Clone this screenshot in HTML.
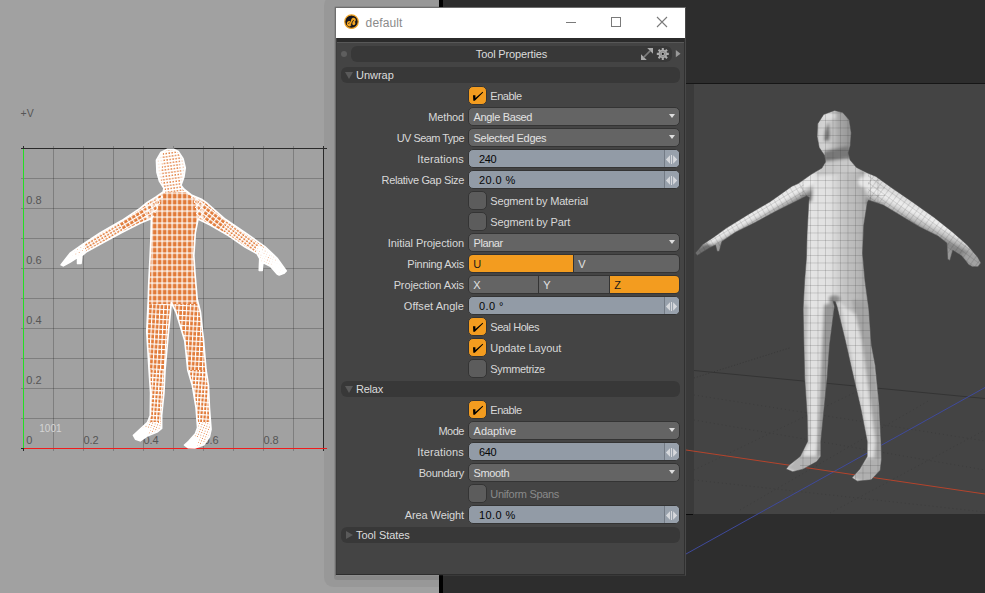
<!DOCTYPE html>
<html>
<head>
<meta charset="utf-8">
<title>default</title>
<style>
*{box-sizing:border-box;margin:0;padding:0}
html,body{width:985px;height:593px;overflow:hidden;background:#a1a1a1;font-family:"Liberation Sans",sans-serif;font-size:11px;color:#d6d6d6}
.abs{position:absolute}
#left{left:0;top:0;width:439px;height:593px;background:#a1a1a1}
#sep{left:439px;top:0;width:4px;height:593px;background:#000}
#right{left:443px;top:0;width:542px;height:593px;background:#2d2d2d}
#vp{left:686px;top:84px;width:299px;height:430px;background:#444}
#vpl{left:686px;top:84px;width:8px;height:430px;background:#3a3a3a}
#vptop{left:686px;top:83px;width:299px;height:1px;background:#161616}
/* window */
#shadow{left:324px;top:-4px;width:115px;height:591px;background:rgba(0,0,0,0.05);border-radius:9px 0 0 9px}
#shadow2{left:334px;top:6px;width:105px;height:574px;background:rgba(0,0,0,0.09);border-radius:2px 0 0 3px}
#win{left:335px;top:7px;width:351px;height:569px;border:1px solid #6e6e6e;border-right-color:#484848;border-bottom-color:rgba(255,255,255,0.06)}
#title{left:336px;top:8px;width:349px;height:30px;background:#fff}
#title .t{left:29.6px;top:8px;font-size:12px;color:#8a8a8a;letter-spacing:0.13px}
#body{left:336px;top:38px;width:349px;height:537px;background:#444}
#band{left:0;top:0;width:349px;height:4px;background:#2b2b2b}
#hl{left:0;top:4px;width:349px;height:1px;background:#585858}
#bl{left:0;top:0;width:1px;height:537px;background:#3e3e3e}
#br{left:348px;top:0;width:1px;height:537px;background:#303030}
#bb{left:0;top:536px;width:349px;height:1px;background:#2e2e2e}
.pill{position:absolute;left:5px;width:339px;height:16px;background:#383838;border-radius:6px;color:#dcdcdc;line-height:16px}
.pill .tx{position:absolute;left:15px;top:0}
.lab{position:absolute;left:0;width:128px;text-align:right;height:19px;line-height:19px;color:#d8d8d8;white-space:nowrap}
.ctl{position:absolute;left:132px;width:212px;height:19px;border:1px solid #343434;border-radius:5px;background:#646464;color:#e2e2e2;line-height:19px;padding-left:4.6px;white-space:nowrap}
.num{background:#929ba6;color:#060606;padding-left:10px}
.cb{position:absolute;left:132px;width:19px;height:19px;border:1px solid #343434;border-radius:5px;background:#5c5c5c}
.cb.on{background:#f39c1f}
.cbl{position:absolute;left:154.3px;height:19px;line-height:19px;color:#d8d8d8;white-space:nowrap}
.arr{position:absolute;right:4.5px;top:6px;width:0;height:0;border-left:3.9px solid transparent;border-right:3.9px solid transparent;border-top:4.6px solid #dedede}
.spin{position:absolute;right:0;top:0;width:15px;height:17px;border-left:1px solid #737b85;background:#98a1ac;border-radius:0 4px 4px 0}

.ck{position:absolute;left:0;top:0}
.cbl.dis{color:#8a8a8a}
.ctl.seg{padding:0;overflow:hidden;background:#343434}
.sg{position:absolute;top:0;height:17px;background:#646464;color:#e2e2e2;padding-left:4.3px;line-height:19px}
.sg.on{background:#f39c1f;color:#1a1a1a}
.dot{left:5px;top:13px;width:6px;height:6px;border-radius:3px;background:#5e5e5e}
.tri{position:absolute;left:4px;top:5px;width:0;height:0}
.tri.dn{border-left:4px solid transparent;border-right:4px solid transparent;border-top:7px solid #5a5a5a}
.tri.rt{left:5px;top:4px;border-top:4px solid transparent;border-bottom:4px solid transparent;border-left:7px solid #5a5a5a}
</style>
</head>
<body>
<div id="left" class="abs"></div>
<div id="sep" class="abs"></div>
<div id="right" class="abs"></div>
<div id="vp" class="abs"></div>
<div id="vpl" class="abs"></div>
<div id="vptop" class="abs"></div>
<!--UV0-->
<svg class="abs" style="left:0;top:0" width="336" height="593" viewBox="0 0 336 593">
<defs>
<clipPath id="bc"><path d="M167.0 149.4 L173.5 149.4 L178.4 151.6 L183.0 158.7 L185.2 167.8 L183.9 176.9 L180.9 185.2 L183.7 189.0 L191.3 195.0 L202.0 199.6 L207.1 203.3 L225.3 219.3 L246.6 233.7 L264.8 246.6 L276.9 258.0 L286.2 270.9 L283.8 273.3 L279.2 274.9 L277.2 273.9 L270.9 266.6 L263.0 262.5 L262.2 270.3 L259.3 270.3 L259.8 258.7 L257.2 253.8 L245.1 247.0 L228.4 235.6 L210.2 225.0 L198.0 219.0 L195.3 232.8 L193.8 255.5 L195.0 273.7 L197.2 299.5 L200.4 312.0 L203.5 340.0 L206.0 370.0 L208.4 385.2 L209.4 407.9 L211.0 429.2 L209.4 436.8 L204.0 444.6 L194.8 447.9 L188.0 447.6 L184.6 445.1 L188.7 441.3 L195.4 433.7 L197.6 427.7 L196.1 407.9 L192.3 385.2 L187.8 370.0 L184.8 340.7 L176.0 312.0 L171.3 302.6 L168.6 330.0 L165.0 370.0 L163.9 392.8 L161.6 415.5 L161.6 428.4 L157.6 431.7 L147.8 435.6 L140.2 440.8 L135.6 439.2 L133.5 435.3 L138.7 430.5 L147.6 422.4 L150.3 415.5 L150.6 392.8 L149.1 370.0 L146.8 331.6 L148.3 299.5 L148.8 282.8 L149.8 263.0 L150.9 240.3 L151.4 218.5 L140.0 223.3 L121.8 232.5 L100.5 243.9 L86.9 251.4 L81.8 255.7 L81.0 263.5 L77.6 263.5 L77.6 257.4 L70.2 262.0 L63.3 265.8 L61.2 264.8 L70.2 253.2 L82.3 244.8 L100.5 232.7 L121.8 220.6 L140.0 208.5 L147.3 202.5 L155.7 197.2 L163.2 192.0 L164.0 188.2 L159.6 181.4 L157.0 172.3 L156.5 160.2 L160.8 152.6 Z"/></clipPath>
<pattern id="pt" width="5.0" height="6.0" patternUnits="userSpaceOnUse" patternTransform="rotate(0) translate(1.5 0.5)"><rect x="0" y="0" width="1.2" height="6.0" fill="#fff"/><rect x="0" y="0" width="5.0" height="1.2" fill="#fff"/></pattern>
<pattern id="pl" width="3.8" height="5.0" patternUnits="userSpaceOnUse" patternTransform="rotate(3) translate(0.5 0)"><rect x="0" y="0" width="1.1" height="5.0" fill="#fff"/><rect x="0" y="0" width="3.8" height="1.1" fill="#fff"/></pattern>
<pattern id="pll" width="3.3" height="4.2" patternUnits="userSpaceOnUse" patternTransform="rotate(4) translate(0 0)"><rect x="0" y="0" width="1.15" height="4.2" fill="#fff"/><rect x="0" y="0" width="3.3" height="1.2" fill="#fff"/></pattern>
<pattern id="pf" width="2.6" height="2.6" patternUnits="userSpaceOnUse" patternTransform="rotate(20) translate(0 0)"><rect x="0" y="0" width="1.7" height="2.6" fill="#fff"/><rect x="0" y="0" width="2.6" height="1.7" fill="#fff"/></pattern>
<pattern id="ph" width="3.0" height="3.2" patternUnits="userSpaceOnUse" patternTransform="rotate(-8) translate(0 0)"><rect x="0" y="0" width="1.5" height="3.2" fill="#fff"/><rect x="0" y="0" width="3.0" height="1.6" fill="#fff"/></pattern>
<pattern id="pal" width="3.4" height="2.8" patternUnits="userSpaceOnUse" patternTransform="rotate(-31) translate(0 0)"><rect x="0" y="0" width="1.3" height="2.8" fill="#fff"/><rect x="0" y="0" width="3.4" height="1.3" fill="#fff"/></pattern>
<pattern id="pal2" width="4.6" height="4.0" patternUnits="userSpaceOnUse" patternTransform="rotate(-31) translate(0 0)"><rect x="0" y="0" width="1.2" height="4.0" fill="#fff"/><rect x="0" y="0" width="4.6" height="1.2" fill="#fff"/></pattern>
<pattern id="par2" width="4.6" height="4.0" patternUnits="userSpaceOnUse" patternTransform="rotate(37) translate(0 0)"><rect x="0" y="0" width="1.2" height="4.0" fill="#fff"/><rect x="0" y="0" width="4.6" height="1.2" fill="#fff"/></pattern>
<pattern id="par" width="3.4" height="2.8" patternUnits="userSpaceOnUse" patternTransform="rotate(37) translate(0 0)"><rect x="0" y="0" width="1.3" height="2.8" fill="#fff"/><rect x="0" y="0" width="3.4" height="1.3" fill="#fff"/></pattern>
</defs>
<rect x="53" y="146" width="1" height="305" fill="#000" opacity="0.215"/><rect x="21" y="178" width="303" height="1" fill="#000" opacity="0.215"/><rect x="83" y="146" width="1" height="305" fill="#000" opacity="0.215"/><rect x="21" y="208" width="303" height="1" fill="#000" opacity="0.215"/><rect x="113" y="146" width="1" height="305" fill="#000" opacity="0.215"/><rect x="21" y="238" width="303" height="1" fill="#000" opacity="0.215"/><rect x="143" y="146" width="1" height="305" fill="#000" opacity="0.215"/><rect x="21" y="268" width="303" height="1" fill="#000" opacity="0.215"/><rect x="173" y="146" width="1" height="305" fill="#000" opacity="0.215"/><rect x="21" y="298" width="303" height="1" fill="#000" opacity="0.215"/><rect x="203" y="146" width="1" height="305" fill="#000" opacity="0.215"/><rect x="21" y="328" width="303" height="1" fill="#000" opacity="0.215"/><rect x="233" y="146" width="1" height="305" fill="#000" opacity="0.215"/><rect x="21" y="358" width="303" height="1" fill="#000" opacity="0.215"/><rect x="263" y="146" width="1" height="305" fill="#000" opacity="0.215"/><rect x="21" y="388" width="303" height="1" fill="#000" opacity="0.215"/><rect x="293" y="146" width="1" height="305" fill="#000" opacity="0.215"/><rect x="21" y="418" width="303" height="1" fill="#000" opacity="0.215"/>
<rect x="21" y="148" width="306" height="1" fill="#2a2a2a"/>
<rect x="323" y="146" width="1" height="305" fill="#2a2a2a"/>
<rect x="23" y="146" width="1" height="3" fill="#2a2a2a"/>
<rect x="21" y="448" width="3" height="1" fill="#2a2a2a"/><rect x="23" y="448" width="1" height="3" fill="#2a2a2a"/>
<rect x="23" y="149" width="1" height="299" fill="#22e022"/>
<rect x="24" y="448" width="303" height="1" fill="#f01c1c"/>
<g font-family="Liberation Sans, sans-serif" font-size="11" fill="#555">
<text x="20.5" y="116.9" font-size="10.5">+V</text>
<text x="26.3" y="203.8">0.8</text>
<text x="26.3" y="263.8">0.6</text>
<text x="26.3" y="323.8">0.4</text>
<text x="26.3" y="383.8">0.2</text>
<text x="26.3" y="443.6">0</text>
<text x="83.4" y="443.6">0.2</text>
<text x="143.4" y="443.6">0.4</text>
<text x="203.4" y="443.6">0.6</text>
<text x="263.4" y="443.6">0.8</text>
<text x="39.3" y="431.8" font-size="10" fill="#d4d4d4">1001</text>
</g>
<path d="M167.0 149.4 L173.5 149.4 L178.4 151.6 L183.0 158.7 L185.2 167.8 L183.9 176.9 L180.9 185.2 L183.7 189.0 L191.3 195.0 L202.0 199.6 L207.1 203.3 L225.3 219.3 L246.6 233.7 L264.8 246.6 L276.9 258.0 L286.2 270.9 L283.8 273.3 L279.2 274.9 L277.2 273.9 L270.9 266.6 L263.0 262.5 L262.2 270.3 L259.3 270.3 L259.8 258.7 L257.2 253.8 L245.1 247.0 L228.4 235.6 L210.2 225.0 L198.0 219.0 L195.3 232.8 L193.8 255.5 L195.0 273.7 L197.2 299.5 L200.4 312.0 L203.5 340.0 L206.0 370.0 L208.4 385.2 L209.4 407.9 L211.0 429.2 L209.4 436.8 L204.0 444.6 L194.8 447.9 L188.0 447.6 L184.6 445.1 L188.7 441.3 L195.4 433.7 L197.6 427.7 L196.1 407.9 L192.3 385.2 L187.8 370.0 L184.8 340.7 L176.0 312.0 L171.3 302.6 L168.6 330.0 L165.0 370.0 L163.9 392.8 L161.6 415.5 L161.6 428.4 L157.6 431.7 L147.8 435.6 L140.2 440.8 L135.6 439.2 L133.5 435.3 L138.7 430.5 L147.6 422.4 L150.3 415.5 L150.6 392.8 L149.1 370.0 L146.8 331.6 L148.3 299.5 L148.8 282.8 L149.8 263.0 L150.9 240.3 L151.4 218.5 L140.0 223.3 L121.8 232.5 L100.5 243.9 L86.9 251.4 L81.8 255.7 L81.0 263.5 L77.6 263.5 L77.6 257.4 L70.2 262.0 L63.3 265.8 L61.2 264.8 L70.2 253.2 L82.3 244.8 L100.5 232.7 L121.8 220.6 L140.0 208.5 L147.3 202.5 L155.7 197.2 L163.2 192.0 L164.0 188.2 L159.6 181.4 L157.0 172.3 L156.5 160.2 L160.8 152.6 Z" fill="#e17a38"/>
<g clip-path="url(#bc)" shape-rendering="crispEdges">
<rect x="144" y="192" width="60" height="112" fill="url(#pt)"/>
<rect x="140" y="304" width="75" height="66" fill="url(#pl)"/>
<rect x="130" y="370" width="85" height="52" fill="url(#pll)"/>
<rect x="130" y="422" width="85" height="30" fill="url(#pf)"/>
<polygon points="130,428 152,428 140,445 130,445" fill="#fff"/><polygon points="180,440 200,436 196,450 180,450" fill="#fff"/>
<rect x="150" y="145" width="40" height="47" fill="url(#ph)"/>
<rect x="150" y="145" width="40" height="47" fill="#fff" opacity="0.12"/>
<polygon points="156,150 163,148 160,190 156,180" fill="#fff" opacity="0.8"/><polygon points="180,150 186,160 185,178 181,186" fill="#fff" opacity="0.6"/>
<polygon points="60,270 60,240 118,215 124,236" fill="url(#pal)"/>
<polygon points="118,215 150,190 166,190 151.4,222 124,236" fill="url(#pal2)"/>
<polygon points="58,270 58,244 84,238 88,268" fill="url(#pf)"/><polygon points="58,270 58,250 74,250 76,268" fill="#fff" opacity="0.9"/><polygon points="77,256 82,255 82,266 77,266" fill="#fff"/>
<polygon points="226,212 290,262 290,280 255,275 222,238" fill="url(#par)"/>
<polygon points="181,188 200,190 226,212 222,238 198,222 194,200" fill="url(#par2)"/>
<polygon points="256,246 292,250 292,282 256,278" fill="url(#pf)"/><polygon points="274,262 292,258 292,282 270,278" fill="#fff" opacity="0.9"/><polygon points="258,262 264,262 264,272 258,272" fill="#fff"/>
</g>
<path d="M167.0 149.4 L173.5 149.4 L178.4 151.6 L183.0 158.7 L185.2 167.8 L183.9 176.9 L180.9 185.2 L183.7 189.0 L191.3 195.0 L202.0 199.6 L207.1 203.3 L225.3 219.3 L246.6 233.7 L264.8 246.6 L276.9 258.0 L286.2 270.9 L283.8 273.3 L279.2 274.9 L277.2 273.9 L270.9 266.6 L263.0 262.5 L262.2 270.3 L259.3 270.3 L259.8 258.7 L257.2 253.8 L245.1 247.0 L228.4 235.6 L210.2 225.0 L198.0 219.0 L195.3 232.8 L193.8 255.5 L195.0 273.7 L197.2 299.5 L200.4 312.0 L203.5 340.0 L206.0 370.0 L208.4 385.2 L209.4 407.9 L211.0 429.2 L209.4 436.8 L204.0 444.6 L194.8 447.9 L188.0 447.6 L184.6 445.1 L188.7 441.3 L195.4 433.7 L197.6 427.7 L196.1 407.9 L192.3 385.2 L187.8 370.0 L184.8 340.7 L176.0 312.0 L171.3 302.6 L168.6 330.0 L165.0 370.0 L163.9 392.8 L161.6 415.5 L161.6 428.4 L157.6 431.7 L147.8 435.6 L140.2 440.8 L135.6 439.2 L133.5 435.3 L138.7 430.5 L147.6 422.4 L150.3 415.5 L150.6 392.8 L149.1 370.0 L146.8 331.6 L148.3 299.5 L148.8 282.8 L149.8 263.0 L150.9 240.3 L151.4 218.5 L140.0 223.3 L121.8 232.5 L100.5 243.9 L86.9 251.4 L81.8 255.7 L81.0 263.5 L77.6 263.5 L77.6 257.4 L70.2 262.0 L63.3 265.8 L61.2 264.8 L70.2 253.2 L82.3 244.8 L100.5 232.7 L121.8 220.6 L140.0 208.5 L147.3 202.5 L155.7 197.2 L163.2 192.0 L164.0 188.2 L159.6 181.4 L157.0 172.3 L156.5 160.2 L160.8 152.6 Z" fill="none" stroke="#fff" stroke-width="1.7" stroke-linejoin="round"/>
</svg>
<!--UV1-->
<!--VP0-->
<svg class="abs" style="left:686px;top:0" width="299" height="593" viewBox="686 0 299 593">
<defs>
<clipPath id="fc"><path d="M834.6 110.4 L842.8 112.6 L849.2 120.0 L851.2 132.8 L850.3 145.5 L848.3 152.8 L850.1 160.1 L856.5 167.4 L867.4 172.9 L875.9 176.4 L892.3 188.2 L912.4 201.9 L934.2 217.4 L952.4 231.9 L967.0 244.7 L977.9 257.4 L980.9 262.9 L977.9 266.7 L972.5 266.7 L968.8 264.7 L961.5 255.8 L952.8 250.3 L949.9 260.4 L947.7 259.3 L946.8 243.1 L937.9 236.0 L919.6 226.9 L901.4 215.9 L883.2 205.0 L868.6 200.2 L867.3 202.6 L863.7 225.4 L862.5 253.2 L865.0 281.1 L868.8 308.9 L871.3 344.4 L875.2 365.3 L879.0 403.2 L881.0 441.2 L881.5 458.9 L880.2 470.2 L871.2 479.8 L857.3 481.3 L852.0 477.8 L859.8 469.0 L867.2 456.3 L867.2 441.2 L860.8 408.3 L852.0 370.3 L845.2 340.0 L837.0 306.4 L835.2 301.5 L833.2 301.5 L834.4 306.4 L829.6 344.4 L827.1 377.9 L823.3 415.9 L820.8 441.2 L820.8 456.3 L816.8 461.6 L802.9 469.2 L792.8 471.7 L786.2 469.0 L789.0 465.2 L800.3 456.3 L807.7 441.2 L807.2 415.9 L804.7 377.9 L803.9 344.4 L803.1 308.9 L804.6 281.1 L806.4 258.3 L807.1 233.0 L808.9 200.1 L809.3 197.5 L806.6 195.9 L795.6 201.4 L777.4 210.5 L755.6 222.3 L735.5 232.3 L721.9 241.4 L719.3 251.3 L717.1 251.3 L715.5 245.1 L708.2 248.7 L697.3 255.4 L695.3 252.9 L702.8 244.5 L713.7 237.2 L726.4 228.1 L748.3 214.4 L770.1 201.7 L792.0 186.2 L798.2 183.6 L811.0 174.5 L821.9 168.1 L825.5 161.9 L824.6 155.6 L819.2 147.4 L817.1 136.4 L817.7 123.7 L823.7 114.4 Z"/></clipPath>
<linearGradient id="gt" x1="804" y1="0" x2="872" y2="0" gradientUnits="userSpaceOnUse"><stop offset="0" stop-color="#c0c0c0"/><stop offset="0.09" stop-color="#e4e4e4"/><stop offset="0.4" stop-color="#e0e0e0"/><stop offset="0.56" stop-color="#c6c6c6"/><stop offset="0.72" stop-color="#bcbcbc"/><stop offset="0.9" stop-color="#aeaeae"/><stop offset="1" stop-color="#949494"/></linearGradient>
<linearGradient id="gh" x1="817" y1="0" x2="852" y2="0" gradientUnits="userSpaceOnUse"><stop offset="0" stop-color="#cdcdcd"/><stop offset="0.22" stop-color="#d4d4d4"/><stop offset="0.45" stop-color="#c2c2c2"/><stop offset="0.62" stop-color="#a8a8a8"/><stop offset="1" stop-color="#929292"/></linearGradient>
<linearGradient id="gal" x1="750" y1="212" x2="757" y2="224" gradientUnits="userSpaceOnUse"><stop offset="0" stop-color="#e4e4e4"/><stop offset="0.45" stop-color="#eeeeee"/><stop offset="0.8" stop-color="#b0b0b0"/><stop offset="1" stop-color="#7e7e7e"/></linearGradient>
<linearGradient id="gar" x1="925" y1="209" x2="916" y2="226" gradientUnits="userSpaceOnUse"><stop offset="0" stop-color="#dcdcdc"/><stop offset="0.4" stop-color="#f0f0f0"/><stop offset="0.8" stop-color="#b8b8b8"/><stop offset="1" stop-color="#858585"/></linearGradient>
<linearGradient id="gll" x1="804" y1="0" x2="828" y2="0" gradientUnits="userSpaceOnUse"><stop offset="0" stop-color="#c4c4c4"/><stop offset="0.2" stop-color="#e2e2e2"/><stop offset="0.6" stop-color="#d4d4d4"/><stop offset="1" stop-color="#a2a2a2"/></linearGradient>
<linearGradient id="glr" x1="840" y1="0" x2="884" y2="0" gradientUnits="userSpaceOnUse" gradientTransform="skewX(0)"><stop offset="0" stop-color="#cfcfcf"/><stop offset="0.3" stop-color="#e0e0e0"/><stop offset="0.65" stop-color="#c6c6c6"/><stop offset="1" stop-color="#9c9c9c"/></linearGradient>
<pattern id="wf" width="7.5" height="7.5" patternUnits="userSpaceOnUse"><rect width="0.9" height="7.5" fill="#222" opacity="0.17"/><rect width="7.5" height="0.9" fill="#222" opacity="0.17"/></pattern>
<pattern id="wfl" width="5" height="5.5" patternUnits="userSpaceOnUse" patternTransform="rotate(-31)"><rect width="0.8" height="5.5" fill="#222" opacity="0.17"/><rect width="5" height="0.8" fill="#222" opacity="0.15"/></pattern>
<pattern id="wfr" width="5" height="5.5" patternUnits="userSpaceOnUse" patternTransform="rotate(36)"><rect width="0.8" height="5.5" fill="#222" opacity="0.17"/><rect width="5" height="0.8" fill="#222" opacity="0.15"/></pattern>
<filter id="bl"><feGaussianBlur stdDeviation="1.6"/></filter>
</defs>
<g fill="none" stroke-width="1">
<path d="M694 370.5 L985 398.5" stroke="#343434"/>
<path d="M694 378 L791 347.5" stroke="#383838" stroke-dasharray="1 2"/>
<path d="M694 395 L985 441" stroke="#3c3c3c" stroke-dasharray="1 3"/>
<path d="M694 420 L985 470" stroke="#3c3c3c" stroke-dasharray="1 3"/>
<path d="M694 480 L985 512" stroke="#3c3c3c" stroke-dasharray="1 3"/>
<path d="M740 510 L930 400" stroke="#3c3c3c" stroke-dasharray="1 3"/>
<path d="M694 470 L860 390" stroke="#3c3c3c" stroke-dasharray="1 3"/>
<path d="M830 513 L985 430" stroke="#3c3c3c" stroke-dasharray="1 3"/>
<path d="M686 554 L985 387.5" stroke="#3f4a9c"/>
<path d="M686 450 L985 494" stroke="#b5442c"/>
</g>
<rect x="686" y="514" width="7" height="1" fill="#0c0c0c"/>
<g clip-path="url(#fc)">
<g filter="url(#bl)">
<path d="M834.6 110.4 L842.8 112.6 L849.2 120.0 L851.2 132.8 L850.3 145.5 L848.3 152.8 L850.1 160.1 L856.5 167.4 L867.4 172.9 L875.9 176.4 L892.3 188.2 L912.4 201.9 L934.2 217.4 L952.4 231.9 L967.0 244.7 L977.9 257.4 L980.9 262.9 L977.9 266.7 L972.5 266.7 L968.8 264.7 L961.5 255.8 L952.8 250.3 L949.9 260.4 L947.7 259.3 L946.8 243.1 L937.9 236.0 L919.6 226.9 L901.4 215.9 L883.2 205.0 L868.6 200.2 L867.3 202.6 L863.7 225.4 L862.5 253.2 L865.0 281.1 L868.8 308.9 L871.3 344.4 L875.2 365.3 L879.0 403.2 L881.0 441.2 L881.5 458.9 L880.2 470.2 L871.2 479.8 L857.3 481.3 L852.0 477.8 L859.8 469.0 L867.2 456.3 L867.2 441.2 L860.8 408.3 L852.0 370.3 L845.2 340.0 L837.0 306.4 L835.2 301.5 L833.2 301.5 L834.4 306.4 L829.6 344.4 L827.1 377.9 L823.3 415.9 L820.8 441.2 L820.8 456.3 L816.8 461.6 L802.9 469.2 L792.8 471.7 L786.2 469.0 L789.0 465.2 L800.3 456.3 L807.7 441.2 L807.2 415.9 L804.7 377.9 L803.9 344.4 L803.1 308.9 L804.6 281.1 L806.4 258.3 L807.1 233.0 L808.9 200.1 L809.3 197.5 L806.6 195.9 L795.6 201.4 L777.4 210.5 L755.6 222.3 L735.5 232.3 L721.9 241.4 L719.3 251.3 L717.1 251.3 L715.5 245.1 L708.2 248.7 L697.3 255.4 L695.3 252.9 L702.8 244.5 L713.7 237.2 L726.4 228.1 L748.3 214.4 L770.1 201.7 L792.0 186.2 L798.2 183.6 L811.0 174.5 L821.9 168.1 L825.5 161.9 L824.6 155.6 L819.2 147.4 L817.1 136.4 L817.7 123.7 L823.7 114.4 Z" fill="#d6d6d6"/>
<rect x="796" y="160" width="84" height="190" fill="url(#gt)"/>
<rect x="808" y="100" width="50" height="62" fill="url(#gh)"/>
<polygon points="824,151 848,146 851,160 824,164" fill="#787878"/>
<ellipse cx="828" cy="116" rx="8" ry="4" fill="#dedede"/>
<polygon points="822,162 852,158 860,172 816,176" fill="#c8c8c8"/>
<polygon points="686,264 686,230 792,178 814,172 812,201 796,206 722,245 722,260" fill="url(#gal)"/>
<polygon points="864,166 880,172 985,252 985,280 945,266 946,246 866,205" fill="url(#gar)"/>
<polygon points="798,330 834,300 832,345 826,445 826,480 776,480 804,440" fill="#e0e0e0"/>
<polygon points="800,305 808,305 807,345 810,441 800,460 790,470 800,441 801,345" fill="#b8b8b8"/>
<polygon points="824,305 836,300 832,345 823,441 823,462 816,462 817.5,441 822,345" fill="#989898"/>
<polygon points="836,300 876,330 888,440 888,490 844,490 864,445 844,345" fill="#dedede"/>
<polygon points="852,300 872,300 873,340 884,441 884,480 872,484 875.5,441 861.5,340" fill="#a4a4a4"/>
<polygon points="834,304 840,304 848,340 869,441 866,452 863,441 843,340" fill="#c0c0c0"/>
<ellipse cx="834.5" cy="299" rx="6" ry="4" fill="#8c8c8c"/>
<polygon points="825,131 828.5,122 830,134 829,141 824,141" fill="#6e6e6e"/>
<ellipse cx="866" cy="182" rx="8" ry="6" fill="#e6e6e6"/>
<polygon points="786,468 800,456 822,456 818,464 800,474" fill="#b4b4b4"/>
<polygon points="692,258 692,250 706,243 716,246 706,254" fill="#6e6e6e"/>
<polygon points="714,244 722,241 720,254 716,254" fill="#9a9a9a"/>
<polygon points="962,254 972,252 984,264 978,270 968,268" fill="#a2a2a2"/>
<polygon points="946,246 952,250 950,262 946,262" fill="#9a9a9a"/>
<polygon points="852,478 866,458 882,458 880,472 868,484" fill="#b0b0b0"/>
</g>
<rect x="800" y="105" width="85" height="385" fill="url(#wf)"/>
<polygon points="690,262 690,232 800,170 808,200" fill="url(#wfl)"/>
<polygon points="868,168 985,250 985,275 868,206" fill="url(#wfr)"/>
</g>
<path d="M834.6 110.4 L842.8 112.6 L849.2 120.0 L851.2 132.8 L850.3 145.5 L848.3 152.8 L850.1 160.1 L856.5 167.4 L867.4 172.9 L875.9 176.4 L892.3 188.2 L912.4 201.9 L934.2 217.4 L952.4 231.9 L967.0 244.7 L977.9 257.4 L980.9 262.9 L977.9 266.7 L972.5 266.7 L968.8 264.7 L961.5 255.8 L952.8 250.3 L949.9 260.4 L947.7 259.3 L946.8 243.1 L937.9 236.0 L919.6 226.9 L901.4 215.9 L883.2 205.0 L868.6 200.2 L867.3 202.6 L863.7 225.4 L862.5 253.2 L865.0 281.1 L868.8 308.9 L871.3 344.4 L875.2 365.3 L879.0 403.2 L881.0 441.2 L881.5 458.9 L880.2 470.2 L871.2 479.8 L857.3 481.3 L852.0 477.8 L859.8 469.0 L867.2 456.3 L867.2 441.2 L860.8 408.3 L852.0 370.3 L845.2 340.0 L837.0 306.4 L835.2 301.5 L833.2 301.5 L834.4 306.4 L829.6 344.4 L827.1 377.9 L823.3 415.9 L820.8 441.2 L820.8 456.3 L816.8 461.6 L802.9 469.2 L792.8 471.7 L786.2 469.0 L789.0 465.2 L800.3 456.3 L807.7 441.2 L807.2 415.9 L804.7 377.9 L803.9 344.4 L803.1 308.9 L804.6 281.1 L806.4 258.3 L807.1 233.0 L808.9 200.1 L809.3 197.5 L806.6 195.9 L795.6 201.4 L777.4 210.5 L755.6 222.3 L735.5 232.3 L721.9 241.4 L719.3 251.3 L717.1 251.3 L715.5 245.1 L708.2 248.7 L697.3 255.4 L695.3 252.9 L702.8 244.5 L713.7 237.2 L726.4 228.1 L748.3 214.4 L770.1 201.7 L792.0 186.2 L798.2 183.6 L811.0 174.5 L821.9 168.1 L825.5 161.9 L824.6 155.6 L819.2 147.4 L817.1 136.4 L817.7 123.7 L823.7 114.4 Z" fill="none" stroke="#4a4a4a" stroke-width="0.9" opacity="0.55"/>
</svg>
<!--VP1-->
<div id="shadow" class="abs"></div><div id="shadow2" class="abs"></div>
<div id="win" class="abs"></div>
<div id="title" class="abs"><div class="abs t">default</div>
<svg class="abs" style="left:0;top:0" width="349" height="30" viewBox="0 0 349 30">
<circle cx="15.5" cy="13.7" r="6.75" fill="#17171f" stroke="#f0a11f" stroke-width="1.2"/>
<path d="M11 16.6 C10.4 14.6 11.6 12.8 13.2 12.9 C14 12.9 14.5 13.5 14.6 14.2 C15 12.4 15.2 10.4 16.8 9.8 C18.4 9.2 19.9 10.4 19.8 12 C19.7 13 19.2 13.5 18.6 13.7 C19.8 14.4 19.6 16.4 18.2 17 C16.8 17.6 16.2 16.4 16.2 15.6 C15.8 17.6 14.4 18.6 13 18.4 C12 18.3 11.2 17.6 11 16.6 Z" fill="#f3a521"/>
<path d="M15.1 17.2 C15.9 15.4 16.2 13.6 17.6 12.2" stroke="#17171f" stroke-width="1" fill="none"/>
<path d="M12.4 15.8 C12.6 14.8 13.2 14.6 13.6 15" stroke="#17171f" stroke-width="0.8" fill="none"/>
<path d="M230 14.5 H240" stroke="#7a7a7a" stroke-width="1"/>
<rect x="275.5" y="9.5" width="9" height="9" fill="none" stroke="#7a7a7a" stroke-width="1"/>
<path d="M321 9 L331 19 M331 9 L321 19" stroke="#7a7a7a" stroke-width="1.1"/>
</svg>
</div>
<div id="body" class="abs">
<div id="band" class="abs"></div><div id="hl" class="abs"></div><div id="bl" class="abs"></div><div id="br" class="abs"></div><div id="bb" class="abs"></div>
<!--PANEL-->
<div class="abs dot"></div>
<div class="pill" style="left:15px;top:8px;width:321px;text-align:center"><span style="letter-spacing:-0.13px">Tool Properties</span></div>
<svg class="abs" style="left:300px;top:5px" width="48" height="22" viewBox="0 0 48 22">
<path d="M11.2 5 L17 5 L17 10.8 Z M5 11.2 L5 17 L10.8 17 Z" fill="#a9a9a9"/>
<path d="M7.6 14.4 L14.4 7.6" stroke="#7c7c7c" stroke-width="1.6" fill="none"/>
<g transform="translate(15.8,-0.1)"><path d="M9.94 6.83 L9.97 4.99 L12.03 4.99 L12.06 6.83 L13.19 7.30 L14.52 6.02 L15.98 7.48 L14.70 8.81 L15.17 9.94 L17.01 9.97 L17.01 12.03 L15.17 12.06 L14.70 13.19 L15.98 14.52 L14.52 15.98 L13.19 14.70 L12.06 15.17 L12.03 17.01 L9.97 17.01 L9.94 15.17 L8.81 14.70 L7.48 15.98 L6.02 14.52 L7.30 13.19 L6.83 12.06 L4.99 12.03 L4.99 9.97 L6.83 9.94 L7.30 8.81 L6.02 7.48 L7.48 6.02 L8.81 7.30Z" fill="#ababab"/><circle cx="11" cy="11" r="2.6" fill="none" stroke="#8a8a8a" stroke-width="1"/><circle cx="11" cy="11" r="1.1" fill="#1c1c1c"/></g>
<path d="M39.8 7.1 L44.5 10.7 L39.8 14.3 Z" fill="#9a9a9a"/>
</svg>
<div class="pill" style="top:29px"><div class="tri dn"></div><div class="tx"><span style="letter-spacing:-0.02px">Unwrap</span></div></div>
<div class="cb on" style="top:48px"><svg class="ck" width="17" height="17" viewBox="0 0 17 17"><path d="M4 8.2 L6.4 8.2 L6.4 11 L13.6 4.8 L14.1 5.5 L5.8 13.8 L4.3 13.8 Z" fill="#000"/></svg></div><div class="cbl" style="top:49px"><span style="letter-spacing:-0.48px">Enable</span></div>
<div class="lab" style="top:70px"><span style="letter-spacing:-0.17px">Method</span></div><div class="ctl" style="top:69px"><span style="letter-spacing:-0.35px">Angle Based</span><div class="arr"></div></div>
<div class="lab" style="top:91px"><span style="letter-spacing:-0.54px">UV Seam Type</span></div><div class="ctl" style="top:90px"><span style="letter-spacing:-0.32px">Selected Edges</span><div class="arr"></div></div>
<div class="lab" style="top:112px"><span style="letter-spacing:0.14px">Iterations</span></div><div class="ctl num" style="top:111px"><span style="letter-spacing:-0.4px">240</span><div class="spin"><svg width="14" height="17" viewBox="0 0 14 17"><path d="M0.9 9.5 L5 5.2 L5 13.8 Z" fill="#d6d8dc"/><rect x="6" y="5" width="1" height="9" fill="#d6d8dc"/><path d="M12.2 9.5 L8.1 5.2 L8.1 13.8 Z" fill="#d6d8dc"/></svg></div></div>
<div class="lab" style="top:133px"><span style="letter-spacing:-0.33px">Relative Gap Size</span></div><div class="ctl num" style="top:132px"><span style="letter-spacing:0.42px">20.0 %</span><div class="spin"><svg width="14" height="17" viewBox="0 0 14 17"><path d="M0.9 9.5 L5 5.2 L5 13.8 Z" fill="#d6d8dc"/><rect x="6" y="5" width="1" height="9" fill="#d6d8dc"/><path d="M12.2 9.5 L8.1 5.2 L8.1 13.8 Z" fill="#d6d8dc"/></svg></div></div>
<div class="cb" style="top:153px"></div><div class="cbl" style="top:154px"><span style="letter-spacing:-0.17px">Segment by Material</span></div>
<div class="cb" style="top:174px"></div><div class="cbl" style="top:175px"><span style="letter-spacing:-0.14px">Segment by Part</span></div>
<div class="lab" style="top:196px"><span style="letter-spacing:-0.08px">Initial Projection</span></div><div class="ctl" style="top:195px"><span style="letter-spacing:-0.45px">Planar</span><div class="arr"></div></div>
<div class="lab" style="top:217px"><span style="letter-spacing:-0.27px">Pinning Axis</span></div><div class="ctl seg" style="top:216px"><div class="sg on" style="left:0;width:104px">U</div><div class="sg" style="left:105px;width:105px">V</div></div>
<div class="lab" style="top:238px"><span style="letter-spacing:-0.12px">Projection Axis</span></div><div class="ctl seg" style="top:237px"><div class="sg" style="left:0;width:69px">X</div><div class="sg" style="left:70px;width:70px">Y</div><div class="sg on" style="left:141px;width:69px">Z</div></div>
<div class="lab" style="top:259px"><span style="letter-spacing:0.04px">Offset Angle</span></div><div class="ctl num" style="top:258px"><span style="letter-spacing:0.4px">0.0 °</span><div class="spin"><svg width="14" height="17" viewBox="0 0 14 17"><path d="M0.9 9.5 L5 5.2 L5 13.8 Z" fill="#d6d8dc"/><rect x="6" y="5" width="1" height="9" fill="#d6d8dc"/><path d="M12.2 9.5 L8.1 5.2 L8.1 13.8 Z" fill="#d6d8dc"/></svg></div></div>
<div class="cb on" style="top:279px"><svg class="ck" width="17" height="17" viewBox="0 0 17 17"><path d="M4 8.2 L6.4 8.2 L6.4 11 L13.6 4.8 L14.1 5.5 L5.8 13.8 L4.3 13.8 Z" fill="#000"/></svg></div><div class="cbl" style="top:280px"><span style="letter-spacing:-0.44px">Seal Holes</span></div>
<div class="cb on" style="top:300px"><svg class="ck" width="17" height="17" viewBox="0 0 17 17"><path d="M4 8.2 L6.4 8.2 L6.4 11 L13.6 4.8 L14.1 5.5 L5.8 13.8 L4.3 13.8 Z" fill="#000"/></svg></div><div class="cbl" style="top:301px"><span style="letter-spacing:-0.04px">Update Layout</span></div>
<div class="cb" style="top:321px"></div><div class="cbl" style="top:322px"><span style="letter-spacing:-0.35px">Symmetrize</span></div>
<div class="pill" style="top:343px"><div class="tri dn"></div><div class="tx"><span style="letter-spacing:-0.23px">Relax</span></div></div>
<div class="cb on" style="top:362px"><svg class="ck" width="17" height="17" viewBox="0 0 17 17"><path d="M4 8.2 L6.4 8.2 L6.4 11 L13.6 4.8 L14.1 5.5 L5.8 13.8 L4.3 13.8 Z" fill="#000"/></svg></div><div class="cbl" style="top:363px"><span style="letter-spacing:-0.48px">Enable</span></div>
<div class="lab" style="top:384px"><span style="letter-spacing:-0.48px">Mode</span></div><div class="ctl" style="top:383px"><span style="letter-spacing:-0.04px">Adaptive</span><div class="arr"></div></div>
<div class="lab" style="top:405px"><span style="letter-spacing:0.14px">Iterations</span></div><div class="ctl num" style="top:404px"><span style="letter-spacing:-0.4px">640</span><div class="spin"><svg width="14" height="17" viewBox="0 0 14 17"><path d="M0.9 9.5 L5 5.2 L5 13.8 Z" fill="#d6d8dc"/><rect x="6" y="5" width="1" height="9" fill="#d6d8dc"/><path d="M12.2 9.5 L8.1 5.2 L8.1 13.8 Z" fill="#d6d8dc"/></svg></div></div>
<div class="lab" style="top:426px"><span style="letter-spacing:-0.22px">Boundary</span></div><div class="ctl" style="top:425px"><span style="letter-spacing:-0.37px">Smooth</span><div class="arr"></div></div>
<div class="cb" style="top:446px"></div><div class="cbl dis" style="top:447px"><span style="letter-spacing:-0.31px">Uniform Spans</span></div>
<div class="lab" style="top:468px"><span style="letter-spacing:-0.1px">Area Weight</span></div><div class="ctl num" style="top:467px"><span style="letter-spacing:0.42px">10.0 %</span><div class="spin"><svg width="14" height="17" viewBox="0 0 14 17"><path d="M0.9 9.5 L5 5.2 L5 13.8 Z" fill="#d6d8dc"/><rect x="6" y="5" width="1" height="9" fill="#d6d8dc"/><path d="M12.2 9.5 L8.1 5.2 L8.1 13.8 Z" fill="#d6d8dc"/></svg></div></div>
<div class="pill" style="top:489px"><div class="tri rt"></div><div class="tx"><span style="letter-spacing:-0.07px">Tool States</span></div></div>
</div>
</body>
</html>
